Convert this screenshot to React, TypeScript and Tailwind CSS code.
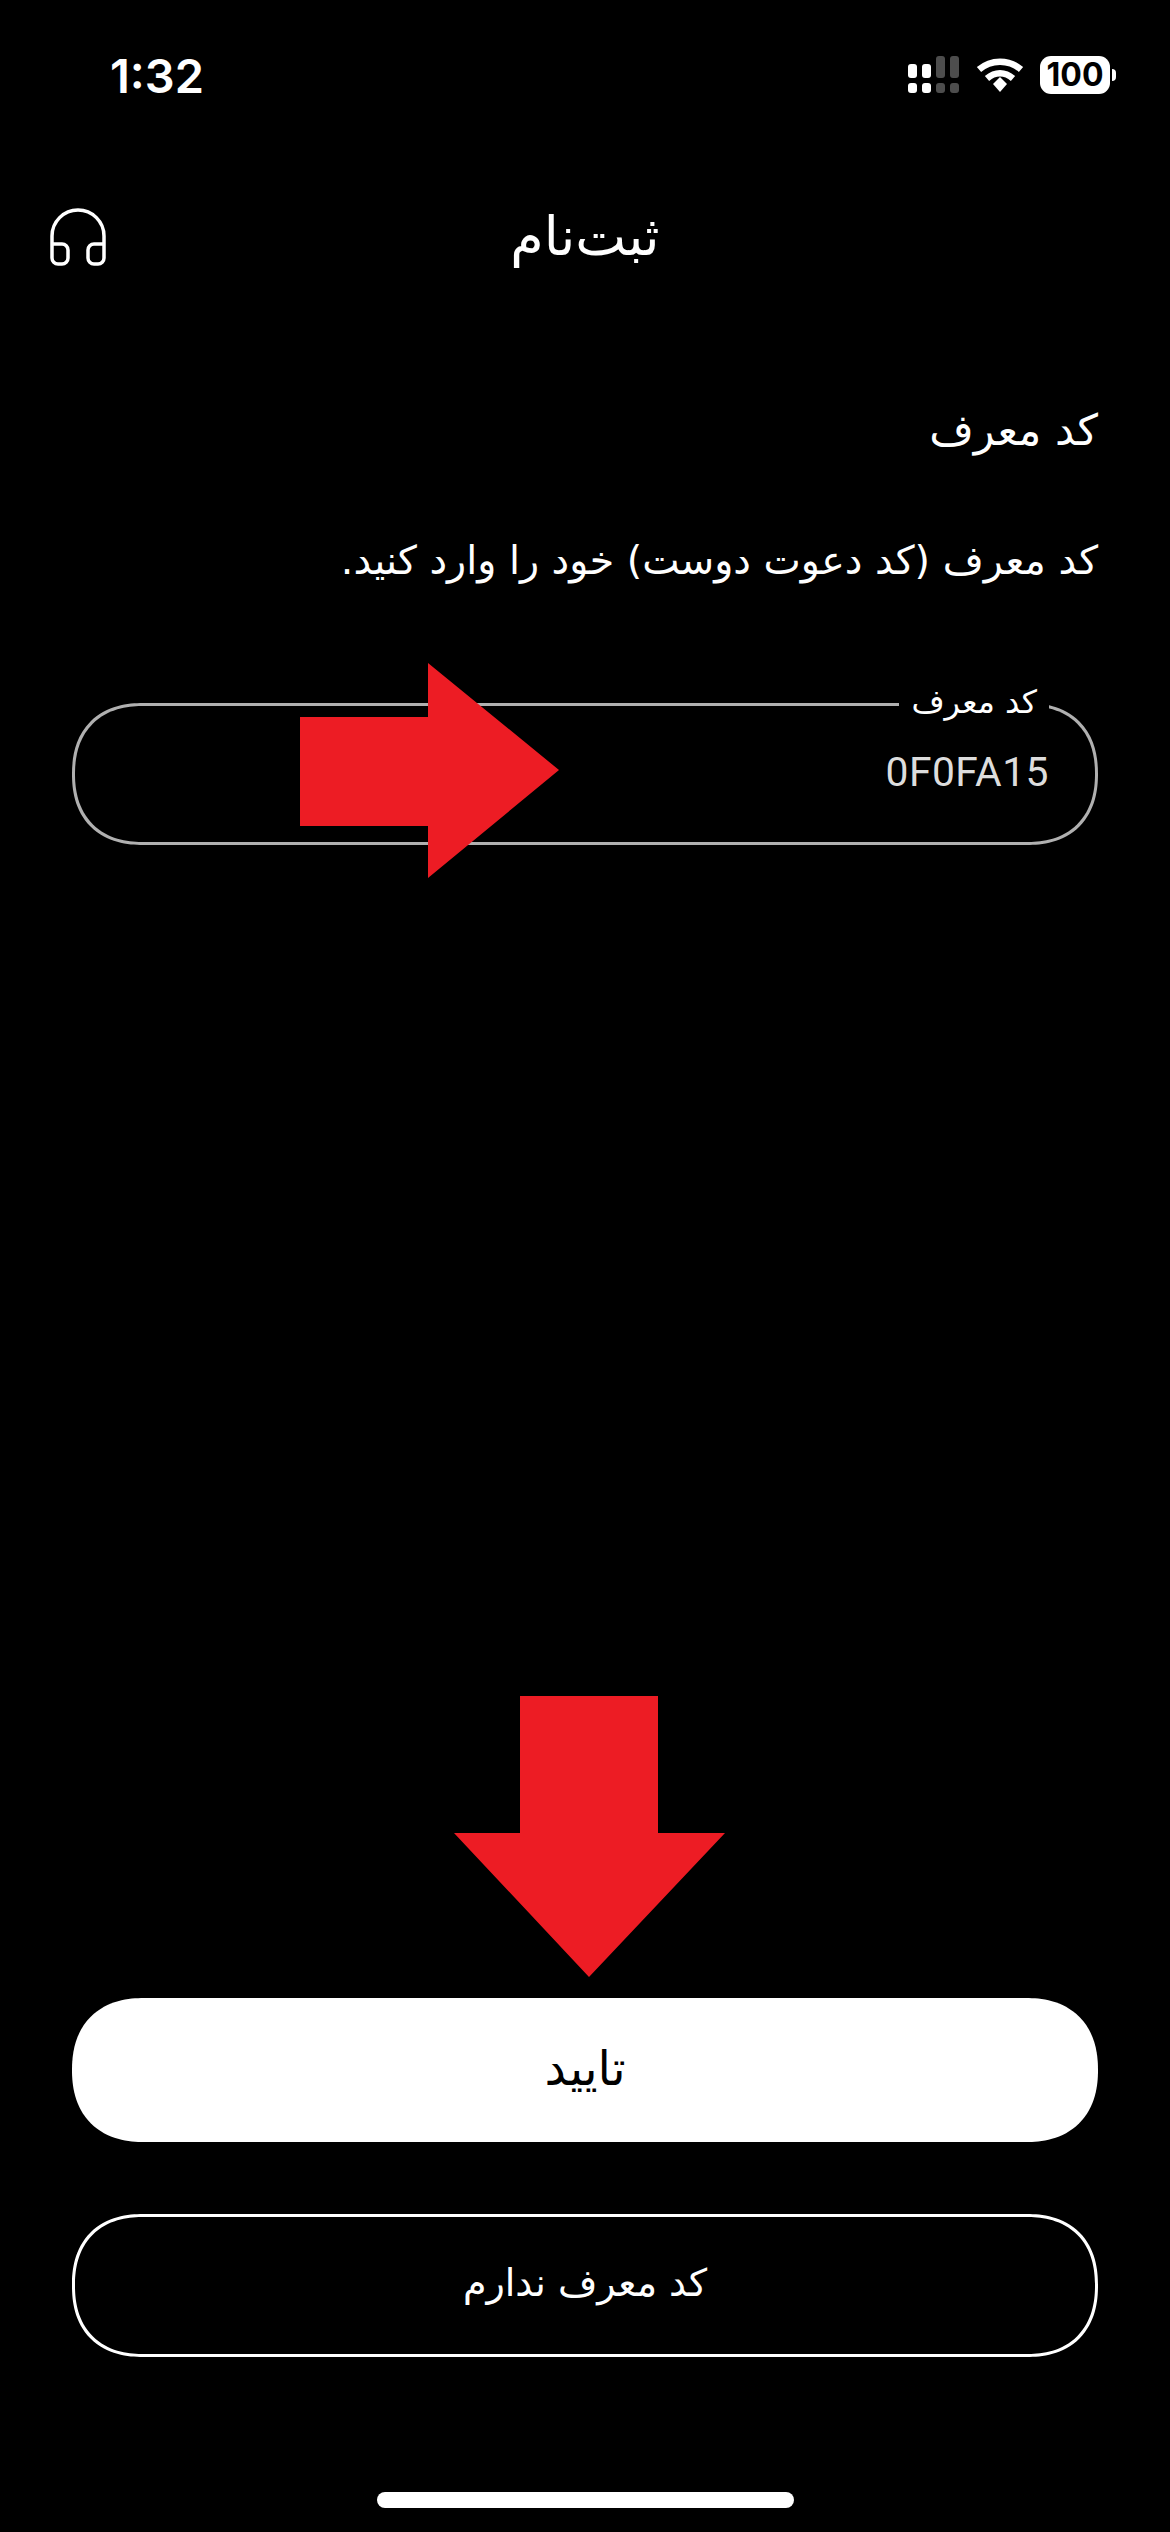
const persian = { fontFamily: '"DejaVu Sans", sans-serif' };

function SignalIcon() {
  return (
    <svg width="54" height="38" viewBox="0 0 54 38" fill="white">
      <rect x="2" y="8" width="9" height="14" rx="3" />
      <rect x="16" y="8" width="9" height="14" rx="3" />
      <rect x="30" y="0" width="9" height="22" rx="3" opacity="0.3" />
      <rect x="44" y="0" width="9" height="22" rx="3" opacity="0.3" />
      <rect x="2" y="27" width="9" height="10" rx="3" />
      <rect x="16" y="27" width="9" height="10" rx="3" />
      <rect x="30" y="27" width="9" height="10" rx="3" opacity="0.3" />
      <rect x="44" y="27" width="9" height="10" rx="3" opacity="0.3" />
    </svg>
  );
}

function WifiIcon() {
  return (
    <svg width="48" height="36" viewBox="0 0 48 36" fill="none" stroke="white" strokeWidth="6.5">
      <path d="M3 12.5C15 2 33 2 45 12.5" />
      <path d="M11 21.5C19 14.5 29 14.5 37 21.5" />
      <path d="M17 27L24 20L31 27L24 35Z" fill="white" stroke="none" />
    </svg>
  );
}

function HeadsetIcon() {
  return (
    <svg width="60" height="60" viewBox="0 0 60 60" fill="none" stroke="white" strokeWidth="3.5">
      <path d="M4 36h10a6 6 0 0 1 6 6v8a6 6 0 0 1 -6 6h-4a6 6 0 0 1 -6 -6V28a26 26 0 0 1 52 0v22a6 6 0 0 1 -6 6h-4a6 6 0 0 1 -6 -6v-8a6 6 0 0 1 6 -6h10" />
    </svg>
  );
}

export default function App() {
  return (
    <div dir="rtl" className="relative flex h-[2532px] w-[1170px] flex-col overflow-hidden bg-black text-white" style={persian}>
      {/* Status bar */}
      <div dir="ltr" className="flex h-[74px] items-center justify-between pl-[110px] pr-[54px] mt-[38px]">
        <span className="text-[47px] font-semibold leading-none" style={{ fontFamily: 'Inter, sans-serif' }}>1:32</span>
        <div className="flex items-center">
          <SignalIcon />
          <div className="ml-[16px]"><WifiIcon /></div>
          <div className="ml-[16px] flex items-center">
            <div className="flex h-[38px] w-[70px] items-center justify-center rounded-[11px] bg-white text-[32px] font-bold leading-none text-black" style={{ fontFamily: 'Inter, sans-serif' }}>100</div>
            <div className="ml-[2px] h-[12px] w-[4px] rounded-r-full bg-white" />
          </div>
        </div>
      </div>

      {/* Header */}
      <div dir="ltr" className="relative mt-[96px] flex h-[60px] items-center justify-center">
        <div className="absolute left-[48px] top-0"><HeadsetIcon /></div>
        <span className="pb-[3px] text-[54px] leading-none" dir="rtl">ثبت‌نام</span>
      </div>

      {/* Content */}
      <div className="mt-[132px] px-[72px]">
        <h1 className="text-[43px] leading-[60px] font-normal">کد معرف</h1>
        <p className="mt-[70px] text-[39.6px] leading-[60px]">کد معرف (کد دعوت دوست) خود را وارد کنید.</p>

        <div className="relative mt-[113px] flex h-[142px] items-center rounded-[71px] border-[3px] border-[#b0b0b0] pb-[2px] pr-[46px] [corner-shape:superellipse(1.2)]">
          <span className="absolute right-[46px] top-[-26px] bg-black px-[12px] text-[32px] leading-[44px]">کد معرف</span>
          <span dir="ltr" className="text-[40.8px] tracking-[0.5px] text-[#dddddd]" style={{ fontFamily: 'Roboto, sans-serif' }}>0F0FA15</span>
        </div>
      </div>

      <div className="flex-1" />

      {/* Actions */}
      <div className="flex flex-col gap-[72px] px-[72px]">
        <button className="flex h-[144px] items-center justify-center rounded-[72px] bg-white pb-[4px] text-[48px] text-black [corner-shape:superellipse(1.2)]">تایید</button>
        <button className="flex h-[143px] items-center justify-center rounded-[71px] border-[3px] border-white pb-[4px] text-[38px] text-white [corner-shape:superellipse(1.2)]">کد معرف ندارم</button>
      </div>

      {/* Home indicator */}
      <div className="mt-[135px] mb-[24px] flex justify-center">
        <div className="h-[16px] w-[417px] rounded-full bg-white" />
      </div>

      {/* Red annotation arrows */}
      <svg className="absolute left-[300px] top-[663px]" width="260" height="216" viewBox="0 0 260 216" fill="#ed1c24">
        <path d="M0 54H128V0L259 107L128 215V163H0Z" />
      </svg>
      <svg className="absolute left-[454px] top-[1696px]" width="272" height="282" viewBox="0 0 272 282" fill="#ed1c24">
        <path d="M66 0H204V137H271L135 281L0 137H66Z" />
      </svg>
    </div>
  );
}
